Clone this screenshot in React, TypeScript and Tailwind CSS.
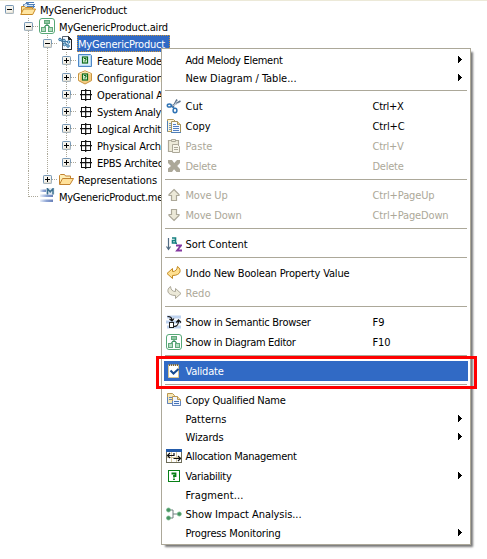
import { useLayoutEffect, useRef, type ReactNode } from "react";

/* Text run whose tracking is fitted to a given width. */
function Label({ text, width }: { text: string; width: number }) {
  const ref = useRef<HTMLSpanElement>(null);
  useLayoutEffect(() => {
    const el = ref.current;
    if (!el) return;
    el.style.letterSpacing = "0px";
    const natural = el.getBoundingClientRect().width;
    el.style.letterSpacing = `${(width - natural) / text.length}px`;
  }, [text, width]);
  return (
    <span ref={ref} className="block w-fit whitespace-pre pt-0.5">
      {text}
    </span>
  );
}

function Svg({ children }: { children: ReactNode }) {
  return (
    <svg width="16" height="16" viewBox="0 0 16 16" fill="none" className="block shrink-0">
      {children}
    </svg>
  );
}

const OpenProject = () => (
  <Svg>
    <path d="M3.500 12V3.500h1l1-1h3l1 1h4V7" fill="#cfe3f7" stroke="#5b83b5" />
    <path d="M6 1.500h8M7 3.500h8M7 5.500h8" stroke="#4e7fb8" />
    <path d="M1.500 13.500V5.500h3l1 1h7v2" fill="#fbe3a0" stroke="#c98b2a" />
    <path d="M.7 13.500l2.800-5.500h12l-2.800 5.500z" fill="#ffe5a0" stroke="#c88a26" />
  </Svg>
);
const Diagram = () => (
  <Svg>
    <rect x=".5" y=".5" width="15" height="15" rx="2.500" fill="#fff" stroke="#58a877" />
    <path d="M8 5v3M7 7l-2 3M9 7l2 3" stroke="#3c9160" strokeWidth="1.300" />
    <rect x="5.500" y="2.500" width="5" height="3" fill="#8fc7a2" stroke="#61a97b" />
    <rect x="2.500" y="9.500" width="4" height="4" fill="#b4dcc0" stroke="#61a97b" />
    <rect x="9.500" y="9.500" width="4" height="4" fill="#b4dcc0" stroke="#61a97b" />
  </Svg>
);
const ModelFile = () => (
  <Svg>
    <path d="M4.500 1.500h6l3 3v10h-9z" fill="#f7faff" stroke="#55606e" />
    <path d="M10.500 1.500v3h3z" fill="#333" stroke="#222" />
    <path d="M13.500 5v9.500H4" stroke="#222" />
    <path d="M2 4.500L6 6l3 4M6 6l4.500 1M2.500 5l4 4.500" stroke="#356f9c" />
    <g fill="#a9d4ef" stroke="#286b9c" strokeWidth=".9">
      <circle cx="2" cy="4.500" r="1.300" />
      <circle cx="6" cy="5.500" r="1.300" />
      <circle cx="10.500" cy="7" r="1.300" />
      <circle cx="6.500" cy="9.500" r="1.300" />
      <circle cx="10" cy="11" r="1.300" />
    </g>
  </Svg>
);
const Badge = () => (
  <>
    <rect x="5.500" y="5" width="5" height="6" fill="#dff3d6" stroke="#0d6b1c" strokeWidth="1.200" />
    <path d="M7 6.500h2v1.500H8v.7M8 9.300v1" stroke="#0d6b1c" />
  </>
);
const Feature = () => (
  <Svg>
    <path d="M1.500 2.500h12l1 1v11h-13z" fill="#b9d9f3" stroke="#4c86c6" />
    <path d="M3 4h9.500l.5 1v8H3z" fill="#dceefd" />
    <Badge />
  </Svg>
);
const Configuration = () => (
  <Svg>
    <path d="M8 1.800l6.500 2.800v7L8 15l-6.500-3.400v-7z" fill="#f3cd85" stroke="#c9943f" />
    <path d="M2.500 5L8 2.800 13.500 5M2.500 6v5" stroke="#fff0c8" />
    <Badge />
  </Svg>
);
const Architecture = () => (
  <Svg>
    <rect x="4.500" y="4.500" width="9" height="9" stroke="#111" />
    <path d="M8.700 3v12M3 8.700h12" stroke="#111" strokeWidth="1.200" />
  </Svg>
);
const Folder = () => (
  <Svg>
    <path d="M1.500 13V4.500l1-1h4l1 1.500h5v3" fill="#ffefb7" stroke="#c38330" />
    <path d="M1.500 13.500l3-6h11l-3.500 6z" fill="#ffe19a" stroke="#c38330" />
  </Svg>
);
const Melody = () => (
  <Svg>
    <defs>
      <linearGradient id="stripe" x1="0" x2="1">
        <stop offset="0" stopColor="#e9eff9" />
        <stop offset=".5" stopColor="#8fa6d6" />
        <stop offset="1" stopColor="#6880b8" />
      </linearGradient>
    </defs>
    <g fill="url(#stripe)">
      <rect x="1" y="1.500" width="7" height="2.500" />
      <rect x="1" y="6.500" width="13" height="2.500" />
      <rect x="1" y="11.500" width="13" height="2.500" />
    </g>
    <rect x="7" y="0" width="8.500" height="6.500" fill="#dfeaf2" />
    <path d="M8.500 6.500V.8l2.700 3 2.800-3v5.700" stroke="#3d7090" strokeWidth="1.500" />
  </Svg>
);
const Cut = () => (
  <Svg>
    <path d="M5 8.500L14.500 3M7 9L11 1.500" stroke="#60758c" strokeWidth="1.600" />
    <path d="M5.500 8.300L12.500 5M8 8l3-5" stroke="#d9e2eb" strokeWidth=".7" />
    <ellipse cx="3.300" cy="7.500" rx="2" ry="1.600" stroke="#2f73b4" strokeWidth="1.500" />
    <ellipse cx="9" cy="12.500" rx="1.900" ry="2.200" stroke="#2f73b4" strokeWidth="1.500" />
    <path d="M5 8l3.500 2.500" stroke="#2f73b4" strokeWidth="1.400" />
  </Svg>
);
const Copy = () => (
  <Svg>
    <path d="M1.500 1.500h6l2 2v10h-8z" fill="#fff5d5" stroke="#b49a5c" />
    <path d="M3 5.500h2M3 7.500h2M3 9.500h2M3 11.500h2" stroke="#6e98ce" />
    <path d="M5.500 3.500h6l3 3v8h-9z" fill="#f6faff" stroke="#a4935f" />
    <path d="M11.500 3.500v3h3" fill="#f3d68b" stroke="#a4935f" />
    <path d="M7 6.500h3M7 8.500h6M7 10.500h6M7 12.500h6" stroke="#517fc1" />
    <path d="M1.500 13.500V3M5 14.500h10" stroke="#5180b6" />
  </Svg>
);
const Paste = () => (
  <Svg>
    <path d="M2.500 2.500h10v11h-10z" fill="#ece9d8" stroke="#aca899" strokeWidth="1.200" />
    <path d="M5.500 3.500v-2h4v2z" fill="#ece9d8" stroke="#aca899" />
    <path d="M6.500 6.500h5l2 2v6h-7z" fill="#f7f5ea" stroke="#aca899" />
    <path d="M8 9.500h4M8 11.500h4" stroke="#aca899" />
  </Svg>
);
const Delete = () => (
  <Svg>
    <path d="M2 2h4l2.200 3L11 2h3v3l-2.800 3L14 11v3h-3.500L8 11.300 6 14H2v-3.500L5 8 2 5z" fill="#aca899" />
  </Svg>
);
const Up = () => (
  <Svg>
    <path d="M8 2.500l5 5v1h-2.500v5h-5v-5H3v-1z" fill="#ece9d8" stroke="#aca899" strokeWidth="1.200" />
  </Svg>
);
const Down = () => (
  <Svg>
    <path d="M8 13.500l5-5v-1h-2.500v-5h-5v5H3v1z" fill="#ece9d8" stroke="#aca899" strokeWidth="1.200" />
  </Svg>
);
const Sort = () => (
  <Svg>
    <path d="M2.500 2v11M.5 10.500l2 3 2-3" stroke="#516b82" strokeWidth="1.200" />
    <path d="M6 2h3.500v5.500M9.500 4.500H6.500V7h3M9.500 7.200h1.500" stroke="#168080" strokeWidth="1.600" />
    <path d="M10 9.500h5l-4 5h5" stroke="#8438a0" strokeWidth="1.800" />
  </Svg>
);
const Undo = () => (
  <Svg>
    <path d="M1 8.500L6.500 3.500v3c3 0 4.500-1.500 5-5 4.500 3 3.500 9-5 9V13.500z" fill="#ffe091" stroke="#c38a22" />
  </Svg>
);
const Redo = () => (
  <Svg>
    <path d="M15 8.500L9.500 3.500v3c-3 0-4.500-1.500-5-5-4.500 3-3.500 9 5 9V13.500z" fill="#ece9d8" stroke="#aca899" />
  </Svg>
);
const Semantic = () => (
  <Svg>
    <path d="M1 3h14M0 8h15M1 13h14" stroke="#bfd3ef" strokeWidth="3" />
    <path d="M1.500 2.500c3 0 4.500 1 4.500 4M3.500 5L6 7l2-2.500" stroke="#111" strokeWidth="1.200" />
    <rect x="3.500" y="8.500" width="4" height="5" fill="#fff" stroke="#222" />
    <path d="M8 12.500c3.500 0 4.500-1.500 4.500-6M10.300 8.500l2.200-2.500L15 8.500" stroke="#111" strokeWidth="1.200" />
  </Svg>
);
const Validate = () => (
  <Svg>
    <path d="M2.500 2h10v12.500h-10z" fill="#fff" stroke="#d8c48f" />
    <path d="M3.500 1v2M5.500 1v2M7.500 1v2M9.500 1v2M11.500 1v2" stroke="#79633c" />
    <path d="M4.500 7.500l3 3 5-4.500" stroke="#164a91" strokeWidth="2" />
  </Svg>
);
const QualifiedCopy = () => (
  <Svg>
    <path d="M1.500 1.500h5l2 2v8h-7z" fill="#f8e7b2" stroke="#b99652" />
    <path d="M3 5.500h4M3 7.500h4" stroke="#6285be" />
    <path d="M1.500 5v6.500H6" stroke="#6285be" />
    <path d="M6.500 4.500h5l3 3v6h-8z" fill="#eff5ff" stroke="#b99652" />
    <path d="M11.500 4.500v3h3" fill="#f8dda2" stroke="#b99652" />
    <path d="M8 9.500h5M8 11.500h5" stroke="#4774b7" />
    <path d="M6.500 9v4.500h8V9" stroke="#6285be" />
  </Svg>
);
const Allocation = () => (
  <Svg>
    <rect x=".5" y="1.500" width="15" height="13" fill="#fff" stroke="#6d6c59" />
    <path d="M0 1h16v3H0z" fill="#235baa" />
    <path d="M5.500 4v10M10.500 4v10M1 9.500h14" stroke="#d8cba2" />
    <path d="M1 7.500h7M4 5L1.500 7.500 4 10M7.500 10.500H15M12 8l2.500 2.500L12 13M8 5v3" stroke="#111" strokeWidth="1.200" />
  </Svg>
);
const Variability = () => (
  <Svg>
    <rect x="2.500" y="2.500" width="11" height="11" fill="#fff" stroke="#078017" />
    <path d="M5.500 5.500h4v2.500H8v1.500M8 10.500V12" stroke="#078017" strokeWidth="1.800" />
  </Svg>
);
const Impact = () => (
  <Svg>
    <path d="M3 4h4v8H3M7 8h6" stroke="#718080" />
    <g fill="#469260" stroke="#73b889" strokeWidth=".8">
      <circle cx="2.500" cy="4" r="2" />
      <circle cx="2.500" cy="12" r="2" />
      <circle cx="13.300" cy="8" r="2" />
    </g>
  </Svg>
);

type Node = {
  level: number;
  text: string;
  width: number;
  icon: ReactNode;
  state?: "open" | "closed";
  selected?: boolean;
};

const nodes: Node[] = [
  { level: 0, text: "MyGenericProduct", width: 87, icon: <OpenProject />, state: "open" },
  { level: 1, text: "MyGenericProduct.aird", width: 109, icon: <Diagram />, state: "open" },
  { level: 2, text: "MyGenericProduct", width: 87, icon: <ModelFile />, state: "open", selected: true },
  { level: 3, text: "Feature Mode", width: 65, icon: <Feature />, state: "closed" },
  { level: 3, text: "Configuration", width: 66, icon: <Configuration />, state: "closed" },
  { level: 3, text: "Operational A", width: 66, icon: <Architecture />, state: "closed" },
  { level: 3, text: "System Analy", width: 64, icon: <Architecture />, state: "closed" },
  { level: 3, text: "Logical Archit", width: 64, icon: <Architecture />, state: "closed" },
  { level: 3, text: "Physical Arch", width: 64, icon: <Architecture />, state: "closed" },
  { level: 3, text: "EPBS Architec", width: 66, icon: <Architecture />, state: "closed" },
  { level: 2, text: "Representations", width: 79, icon: <Folder />, state: "closed" },
  { level: 1, text: "MyGenericProduct.me", width: 104, icon: <Melody /> },
];

const dotsV = "bg-[repeating-linear-gradient(to_bottom,#aca899_0_1px,transparent_1px_2px)]";
const dotsH = "bg-[repeating-linear-gradient(to_right,#aca899_0_1px,transparent_1px_2px)]";

/* One 19px indent column holding a vertical guide line. */
function Guide({ shown }: { shown: boolean }) {
  return (
    <span className="flex h-[17px] w-[19px] shrink-0 justify-center pr-px">
      {shown && <span className={`h-full w-px ${dotsV}`} />}
    </span>
  );
}

function Expander({ state }: { state: "open" | "closed" }) {
  return (
    <svg width="9" height="9" viewBox="0 0 9 9" className="block shrink-0">
      <rect x=".5" y=".5" width="8" height="8" rx=".7" fill="#f5f3ec" stroke="#7898b5" />
      <path d="M1 8h7V5" fill="none" stroke="#d5d0c3" />
      <path d={state === "open" ? "M2 4.500h5" : "M2 4.500h5M4.500 2v5"} stroke="#000" />
    </svg>
  );
}

function TreeRow({ node, index }: { node: Node; index: number }) {
  const { level, state } = node;
  const continues = level > 0 && index < 9;
  return (
    <div className="flex h-[17px] items-center">
      {Array.from({ length: level }, (_, i) => (
        <Guide key={i} shown={i > 0} />
      ))}
      <span className="flex h-[17px] w-[19px] shrink-0 flex-col items-center pr-px">
        <span className={`w-px flex-1 ${level > 0 ? dotsV : ""}`} />
        {state ? <Expander state={state} /> : <span className="h-px w-px bg-[#aca899]" />}
        <span className={`w-px flex-1 ${continues ? dotsV : ""}`} />
      </span>
      <span
        className={`h-px shrink-0 ${level === 0 ? "" : dotsH} ${state ? "-ml-[5px] w-[6px]" : "-ml-[9px] w-[10px]"}`}
      />
      <span className="h-[17px] shrink-0">{node.icon}</span>
      <span
        className={
          node.selected
            ? "ml-[3px] flex h-[17px] w-[93px] shrink-0 items-center bg-[#316ac5] pl-px text-white outline-1 -outline-offset-1 outline-dotted outline-[#ce953a]"
            : "ml-[3px] flex h-[17px] shrink-0 items-center pl-px"
        }
      >
        <Label text={node.text} width={node.width} />
      </span>
    </div>
  );
}

type Item = {
  text: string;
  width: number;
  icon?: ReactNode;
  keys?: string;
  keysWidth?: number;
  disabled?: boolean;
  submenu?: boolean;
  active?: boolean;
};

const groups: Item[][] = [
  [
    { text: "Add Melody Element", width: 97, submenu: true },
    { text: "New Diagram / Table...", width: 111, submenu: true },
  ],
  [
    { text: "Cut", width: 17, icon: <Cut />, keys: "Ctrl+X", keysWidth: 31 },
    { text: "Copy", width: 25, icon: <Copy />, keys: "Ctrl+C", keysWidth: 32 },
    { text: "Paste", width: 27, icon: <Paste />, keys: "Ctrl+V", keysWidth: 31, disabled: true },
    { text: "Delete", width: 31, icon: <Delete />, keys: "Delete", keysWidth: 31, disabled: true },
  ],
  [
    { text: "Move Up", width: 42, icon: <Up />, keys: "Ctrl+PageUp", keysWidth: 62, disabled: true },
    { text: "Move Down", width: 56, icon: <Down />, keys: "Ctrl+PageDown", keysWidth: 76, disabled: true },
  ],
  [{ text: "Sort Content", width: 62, icon: <Sort /> }],
  [
    { text: "Undo New Boolean Property Value", width: 164, icon: <Undo /> },
    { text: "Redo", width: 25, icon: <Redo />, disabled: true },
  ],
  [
    { text: "Show in Semantic Browser", width: 125, icon: <Semantic />, keys: "F9", keysWidth: 12 },
    { text: "Show in Diagram Editor", width: 110, icon: <Diagram />, keys: "F10", keysWidth: 18 },
  ],
  [{ text: "Validate", width: 38, icon: <Validate />, active: true }],
  [
    { text: "Copy Qualified Name", width: 100, icon: <QualifiedCopy /> },
    { text: "Patterns", width: 41, submenu: true },
    { text: "Wizards", width: 38, submenu: true },
    { text: "Allocation Management", width: 111, icon: <Allocation /> },
    { text: "Variability", width: 46, icon: <Variability />, submenu: true },
    { text: "Fragment...", width: 58 },
    { text: "Show Impact Analysis...", width: 116, icon: <Impact /> },
    { text: "Progress Monitoring", width: 95, submenu: true },
  ],
];

function MenuRow({ item }: { item: Item }) {
  const tone = item.active ? "bg-[#316ac5] text-white" : item.disabled ? "text-[#aca899]" : "text-black";
  return (
    <div className={`flex shrink-0 items-center pl-0.5 ${item.icon ? "h-5" : "h-[18px]"} ${tone}`}>
      <span className="w-[19.500px] shrink-0">{item.icon}</span>
      <span className="w-[187px] shrink-0">
        <Label text={item.text} width={item.width} />
      </span>
      <span className="w-[85.500px] shrink-0">
        {item.keys && <Label text={item.keys} width={item.keysWidth ?? 0} />}
      </span>
      {item.submenu && (
        <svg width="4" height="7" viewBox="0 0 4 7" className="mb-[2px] block" shapeRendering="crispEdges">
          <path d="M0 0v7l4-3.500z" fill="#000" />
        </svg>
      )}
    </div>
  );
}

export default function App() {
  return (
    <div className="relative h-[559px] w-[487px] overflow-hidden border-t border-[#ece9d8] bg-white font-['DejaVu_Sans_Condensed','DejaVu_Sans',sans-serif] text-[11px] leading-[14px] text-black [font-stretch:condensed]">
      <div className="flex flex-col">
        {nodes.map((node, i) => (
          <TreeRow key={i} node={node} index={i} />
        ))}
      </div>

      <div className="absolute left-[161px] top-[47px] flex h-[497px] w-[310px] flex-col border border-[#aca899] bg-white p-0.5 shadow-[3px_3px_2px_-1px_#777]">
        {groups.map((group, i) => (
          <div key={i} className="flex flex-col">
            {i > 0 && (
              <div className="h-[9px] px-px pt-[3px]">
                <div className="h-px bg-[#aca899]" />
              </div>
            )}
            {group.map((item) => (
              <MenuRow key={item.text} item={item} />
            ))}
          </div>
        ))}
      </div>

      <div className="absolute left-[156px] top-[355px] h-[33px] w-[321px] border-3 border-[#ff0000]" />
    </div>
  );
}
